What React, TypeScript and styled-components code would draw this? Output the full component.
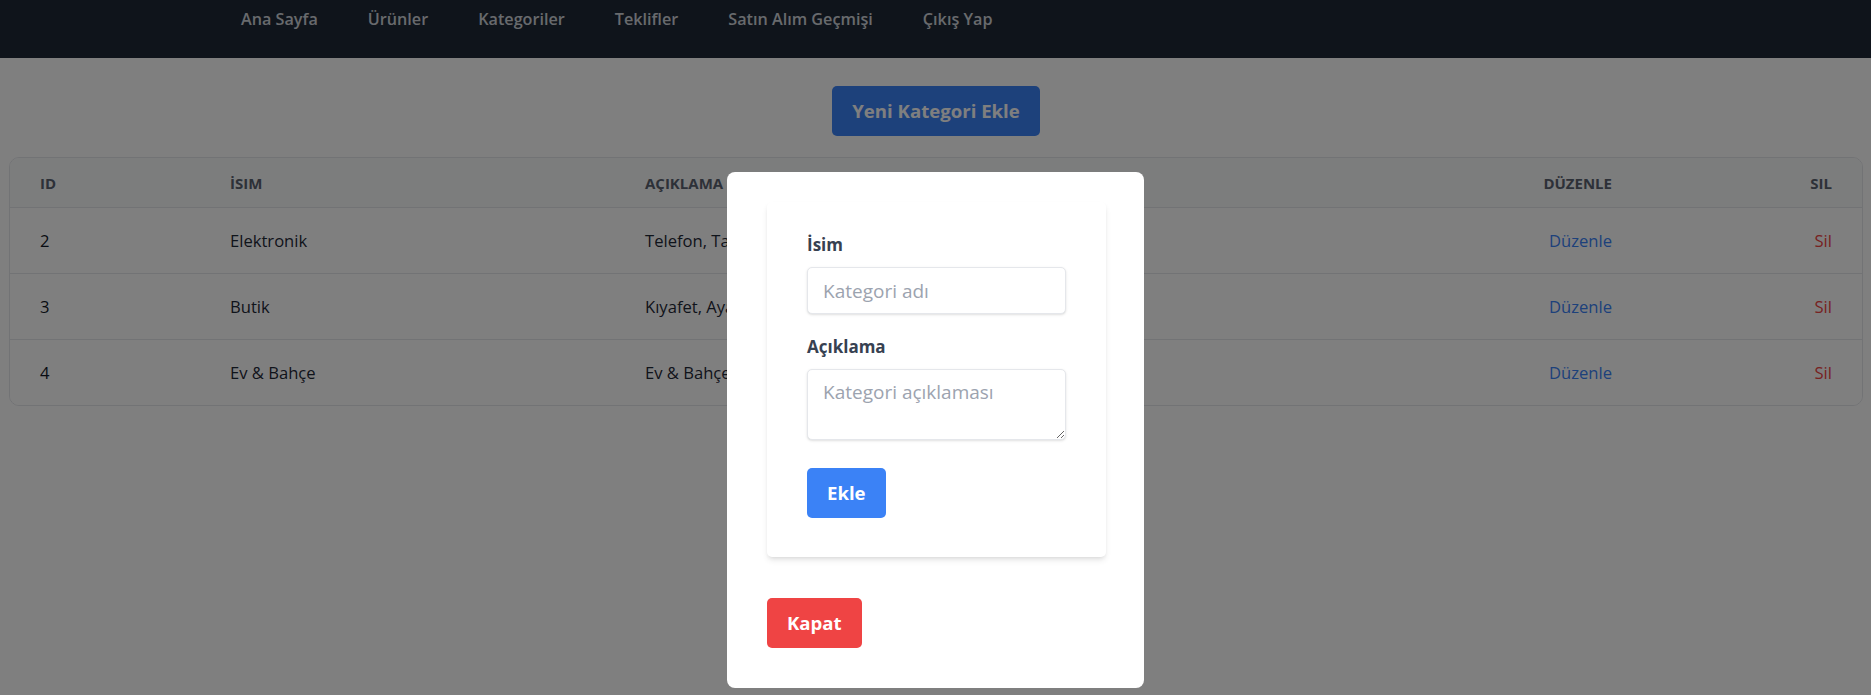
import React from "react";
import styled, { createGlobalStyle } from "styled-components";

const GlobalStyle = createGlobalStyle`
  * { box-sizing: border-box; }
  html, body { margin: 0; padding: 0; }
  body {
    background: #ffffff;
    font-family: "Open Sans", "Liberation Sans", sans-serif;
    color: #111827;
  }
`;

const Page = styled.div`
  min-height: 695px;
  background: #ffffff;
`;

const NavBar = styled.nav`
  height: 58px;
  background: #1f2937;
  display: flex;
  align-items: flex-start;
  padding: 7px 0 0 241px;
  gap: 50px;
`;

const NavLink = styled.a`
  color: #d1d5db;
  font-size: 16.2px;
  font-weight: 600;
  line-height: 25px;
  text-decoration: none;
  white-space: nowrap;
`;

const Main = styled.main`
  padding: 28px 8px 0 9px;
  display: flex;
  flex-direction: column;
  align-items: center;
  gap: 21px;
`;

const Button = styled.button<{ $variant: "blue" | "red" }>`
  height: 50px;
  padding: 0 20px;
  border: none;
  border-radius: 5px;
  background: ${(p) => (p.$variant === "blue" ? "#3b82f6" : "#ef4444")};
  color: #ffffff;
  font-family: "Open Sans", "Liberation Sans", sans-serif;
  font-size: 18.6px;
  font-weight: 700;
  line-height: 30px;
  cursor: pointer;
`;

const TableCard = styled.div`
  width: 100%;
  background: #ffffff;
  border: 1px solid #e5e7eb;
  border-radius: 10px;
  overflow: hidden;
`;

const Row = styled.div<{ $header?: boolean }>`
  display: grid;
  grid-template-columns: 190px 415px 1fr 220px 220px;
  background: ${(p) => (p.$header ? "#f9fafb" : "#ffffff")};
  border-top: ${(p) => (p.$header ? "none" : "1px solid #e5e7eb")};
`;

const HeadCell = styled.div<{ $right?: boolean }>`
  padding: 14.5px 30px;
  font-size: 15px;
  line-height: 20px;
  font-weight: 700;
  text-transform: uppercase;
  color: #5b6270;
  text-align: ${(p) => (p.$right ? "right" : "left")};
  white-space: nowrap;
`;

const Cell = styled.div<{ $tone?: "id" | "text" | "edit" | "delete" }>`
  padding: 20px 30px;
  font-size: 16.6px;
  line-height: 25px;
  white-space: nowrap;
  font-weight: ${(p) => (p.$tone === "id" || p.$tone === "edit" || p.$tone === "delete" ? 500 : 400)};
  text-align: ${(p) => (p.$tone === "edit" || p.$tone === "delete" ? "right" : "left")};
  color: ${(p) =>
    p.$tone === "id"
      ? "#111827"
      : p.$tone === "edit"
      ? "#3b82f6"
      : p.$tone === "delete"
      ? "#ef4444"
      : "#1f2937"};
`;

const Overlay = styled.div`
  position: fixed;
  inset: 0;
  background: rgba(0, 0, 0, 0.5);
  display: flex;
  justify-content: center;
  align-items: flex-start;
  padding-top: 172px;
`;

const Modal = styled.div`
  width: 417px;
  background: #ffffff;
  border-radius: 8px;
  padding: 30px 38px 40px 40px;
  display: flex;
  flex-direction: column;
  align-items: flex-start;
  gap: 41px;
`;

const FormCard = styled.form`
  width: 100%;
  background: #ffffff;
  border-radius: 5px;
  box-shadow: 0 4px 6px -1px rgba(0, 0, 0, 0.1), 0 2px 4px -2px rgba(0, 0, 0, 0.1);
  padding: 30px 40px 39px 40px;
  display: flex;
  flex-direction: column;
  align-items: flex-start;
`;

const Field = styled.div<{ $gap: number }>`
  width: 100%;
  margin-bottom: ${(p) => p.$gap}px;
`;

const Label = styled.label`
  display: block;
  color: #374151;
  font-size: 17px;
  font-weight: 700;
  line-height: 25px;
  margin-bottom: 10px;
`;

const inputBase = `
  display: block;
  width: 100%;
  border: 1px solid #e5e7eb;
  border-radius: 5px;
  box-shadow: 0 1px 3px 0 rgba(0, 0, 0, 0.1), 0 1px 2px -1px rgba(0, 0, 0, 0.1);
  padding: 10px 15px;
  font-family: "Open Sans", "Liberation Sans", sans-serif;
  font-size: 19px;
  line-height: 25px;
  color: #374151;
  background: #ffffff;
  outline: none;
  &::placeholder { color: #9ca3af; }
`;

const TextInput = styled.input`
  ${inputBase}
  height: 47px;
`;

const TextArea = styled.textarea`
  ${inputBase}
  height: 71px;
  resize: vertical;
`;

const navItems = ["Ana Sayfa", "Ürünler", "Kategoriler", "Teklifler", "Satın Alım Geçmişi", "Çıkış Yap"];

const categories = [
  { id: 2, name: "Elektronik", desc: "Telefon, Tablet, Bilgisayar" },
  { id: 3, name: "Butik", desc: "Kıyafet, Ayakkabı, Aksesuar" },
  { id: 4, name: "Ev & Bahçe", desc: "Ev & Bahçe ürünleri" },
];

export default function App() {
  return (
    <Page>
      <GlobalStyle />
      <NavBar>
        {navItems.map((item) => (
          <NavLink key={item} href="#">
            {item}
          </NavLink>
        ))}
      </NavBar>
      <Main>
        <Button $variant="blue">Yeni Kategori Ekle</Button>
        <TableCard>
          <Row $header>
            <HeadCell>ID</HeadCell>
            <HeadCell>İsim</HeadCell>
            <HeadCell>Açıklama</HeadCell>
            <HeadCell $right>Düzenle</HeadCell>
            <HeadCell $right>Sil</HeadCell>
          </Row>
          {categories.map((c) => (
            <Row key={c.id}>
              <Cell $tone="id">{c.id}</Cell>
              <Cell $tone="text">{c.name}</Cell>
              <Cell $tone="text">{c.desc}</Cell>
              <Cell $tone="edit">Düzenle</Cell>
              <Cell $tone="delete">Sil</Cell>
            </Row>
          ))}
        </TableCard>
      </Main>
      <Overlay>
        <Modal>
          <FormCard onSubmit={(e) => e.preventDefault()}>
            <Field $gap={20}>
              <Label>İsim</Label>
              <TextInput placeholder="Kategori adı" />
            </Field>
            <Field $gap={28}>
              <Label>Açıklama</Label>
              <TextArea placeholder="Kategori açıklaması" />
            </Field>
            <Button $variant="blue" type="submit">
              Ekle
            </Button>
          </FormCard>
          <Button $variant="red">Kapat</Button>
        </Modal>
      </Overlay>
    </Page>
  );
}
